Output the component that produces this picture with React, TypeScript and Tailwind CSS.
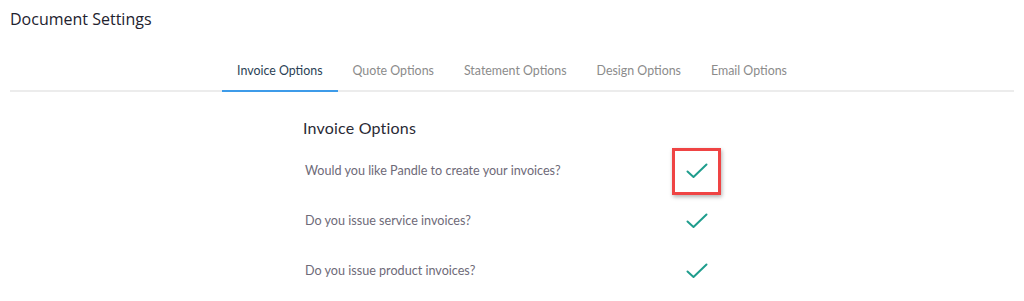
import React from "react";

const tabs = [
  "Invoice Options",
  "Quote Options",
  "Statement Options",
  "Design Options",
  "Email Options",
];

const questions = [
  "Would you like Pandle to create your invoices?",
  "Do you issue service invoices?",
  "Do you issue product invoices?",
];

function Check() {
  return (
    <svg width="22" height="16" viewBox="0 0 22 16" fill="none">
      <polyline
        points="1.5,8.5 7.5,14 20.5,1.5"
        stroke="#1f9d8d"
        strokeWidth="2"
        strokeLinecap="round"
        strokeLinejoin="round"
      />
    </svg>
  );
}

export default function App() {
  return (
    <div
      className="w-[1024px] h-[301px] bg-white overflow-hidden px-[10px]"
      style={{ fontFamily: "Lato, 'Open Sans', sans-serif" }}
    >
      <h1 className="pt-[9px] text-[16px] leading-[20px] text-[#22222e] font-['Open_Sans',sans-serif]">
        Document Settings
      </h1>

      {/* tabs */}
      <div className="mt-[32px] flex justify-center border-b-2 border-[#ececec]">
        {tabs.map((tab, i) => (
          <div
            key={tab}
            className={`-mb-[2px] px-[15px] pb-[9px] text-[12.4px] leading-[20px] border-b-2 ${
              i === 0
                ? "border-[#3d9be9] text-[#2b3f55]"
                : "border-transparent text-[#8b8b8b]"
            }`}
          >
            {tab}
          </div>
        ))}
      </div>

      {/* options */}
      <div className="mx-auto w-[418px] pt-[26px]">
        <h2 className="text-[16px] leading-[20px] text-[#2a2a35] mb-[8px] tracking-[0.2px]">
          Invoice Options
        </h2>
        {questions.map((q, i) => (
          <div key={q} className="flex items-center justify-between h-[50px]">
            <span className="pl-[2px] text-[12.6px] text-[#6e6a78]">{q}</span>
            <div className="relative w-[49px] h-[47px] flex items-center justify-center">
              <Check />
              {i === 0 && (
                <div className="absolute inset-0 border-[3px] border-[#ef4444] shadow-[1px_2px_4px_rgba(0,0,0,0.3)]" />
              )}
            </div>
          </div>
        ))}
      </div>
    </div>
  );
}
